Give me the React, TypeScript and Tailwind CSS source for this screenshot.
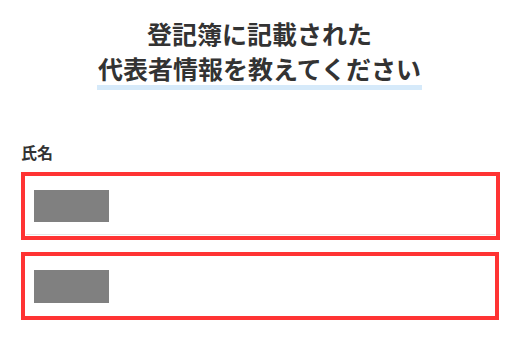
export default function App() {
  return (
    <div
      className="min-h-[337px] w-full bg-white"
      style={{ fontFamily: '"Noto Sans CJK JP", "Noto Sans", sans-serif' }}
    >
      <div className="flex flex-col items-center pt-[16px]">
        <h1 className="text-center text-[25px] font-bold text-[#333333]">
          <span className="block leading-[34px]">登記簿に記載された</span>
          <span className="inline-block border-b-[5px] border-[#d6eafa] px-[1px] leading-[33px]">
            代表者情報を教えてください
          </span>
        </h1>
      </div>

      <div className="px-[21px] pt-[51px]">
        <p className="text-[16px] font-bold leading-[22px] text-[#333333]">氏名</p>

        <div className="mt-[9px] flex flex-col gap-[12px]">
          <div className="h-[68px] w-[479px] border-4 border-[#ff3333] p-[1px]">
            <div className="flex h-full items-center border-b border-[#e5e5e5] pl-[8px]">
              <div className="h-[32px] w-[75px] bg-[#808080]" />
            </div>
          </div>
          <div className="h-[68px] w-[478px] border-4 border-[#ff3333] p-[1px]">
            <div className="flex h-full items-center pl-[8px]">
              <div className="h-[33px] w-[75px] bg-[#808080]" />
            </div>
          </div>
        </div>
      </div>
    </div>
  );
}
